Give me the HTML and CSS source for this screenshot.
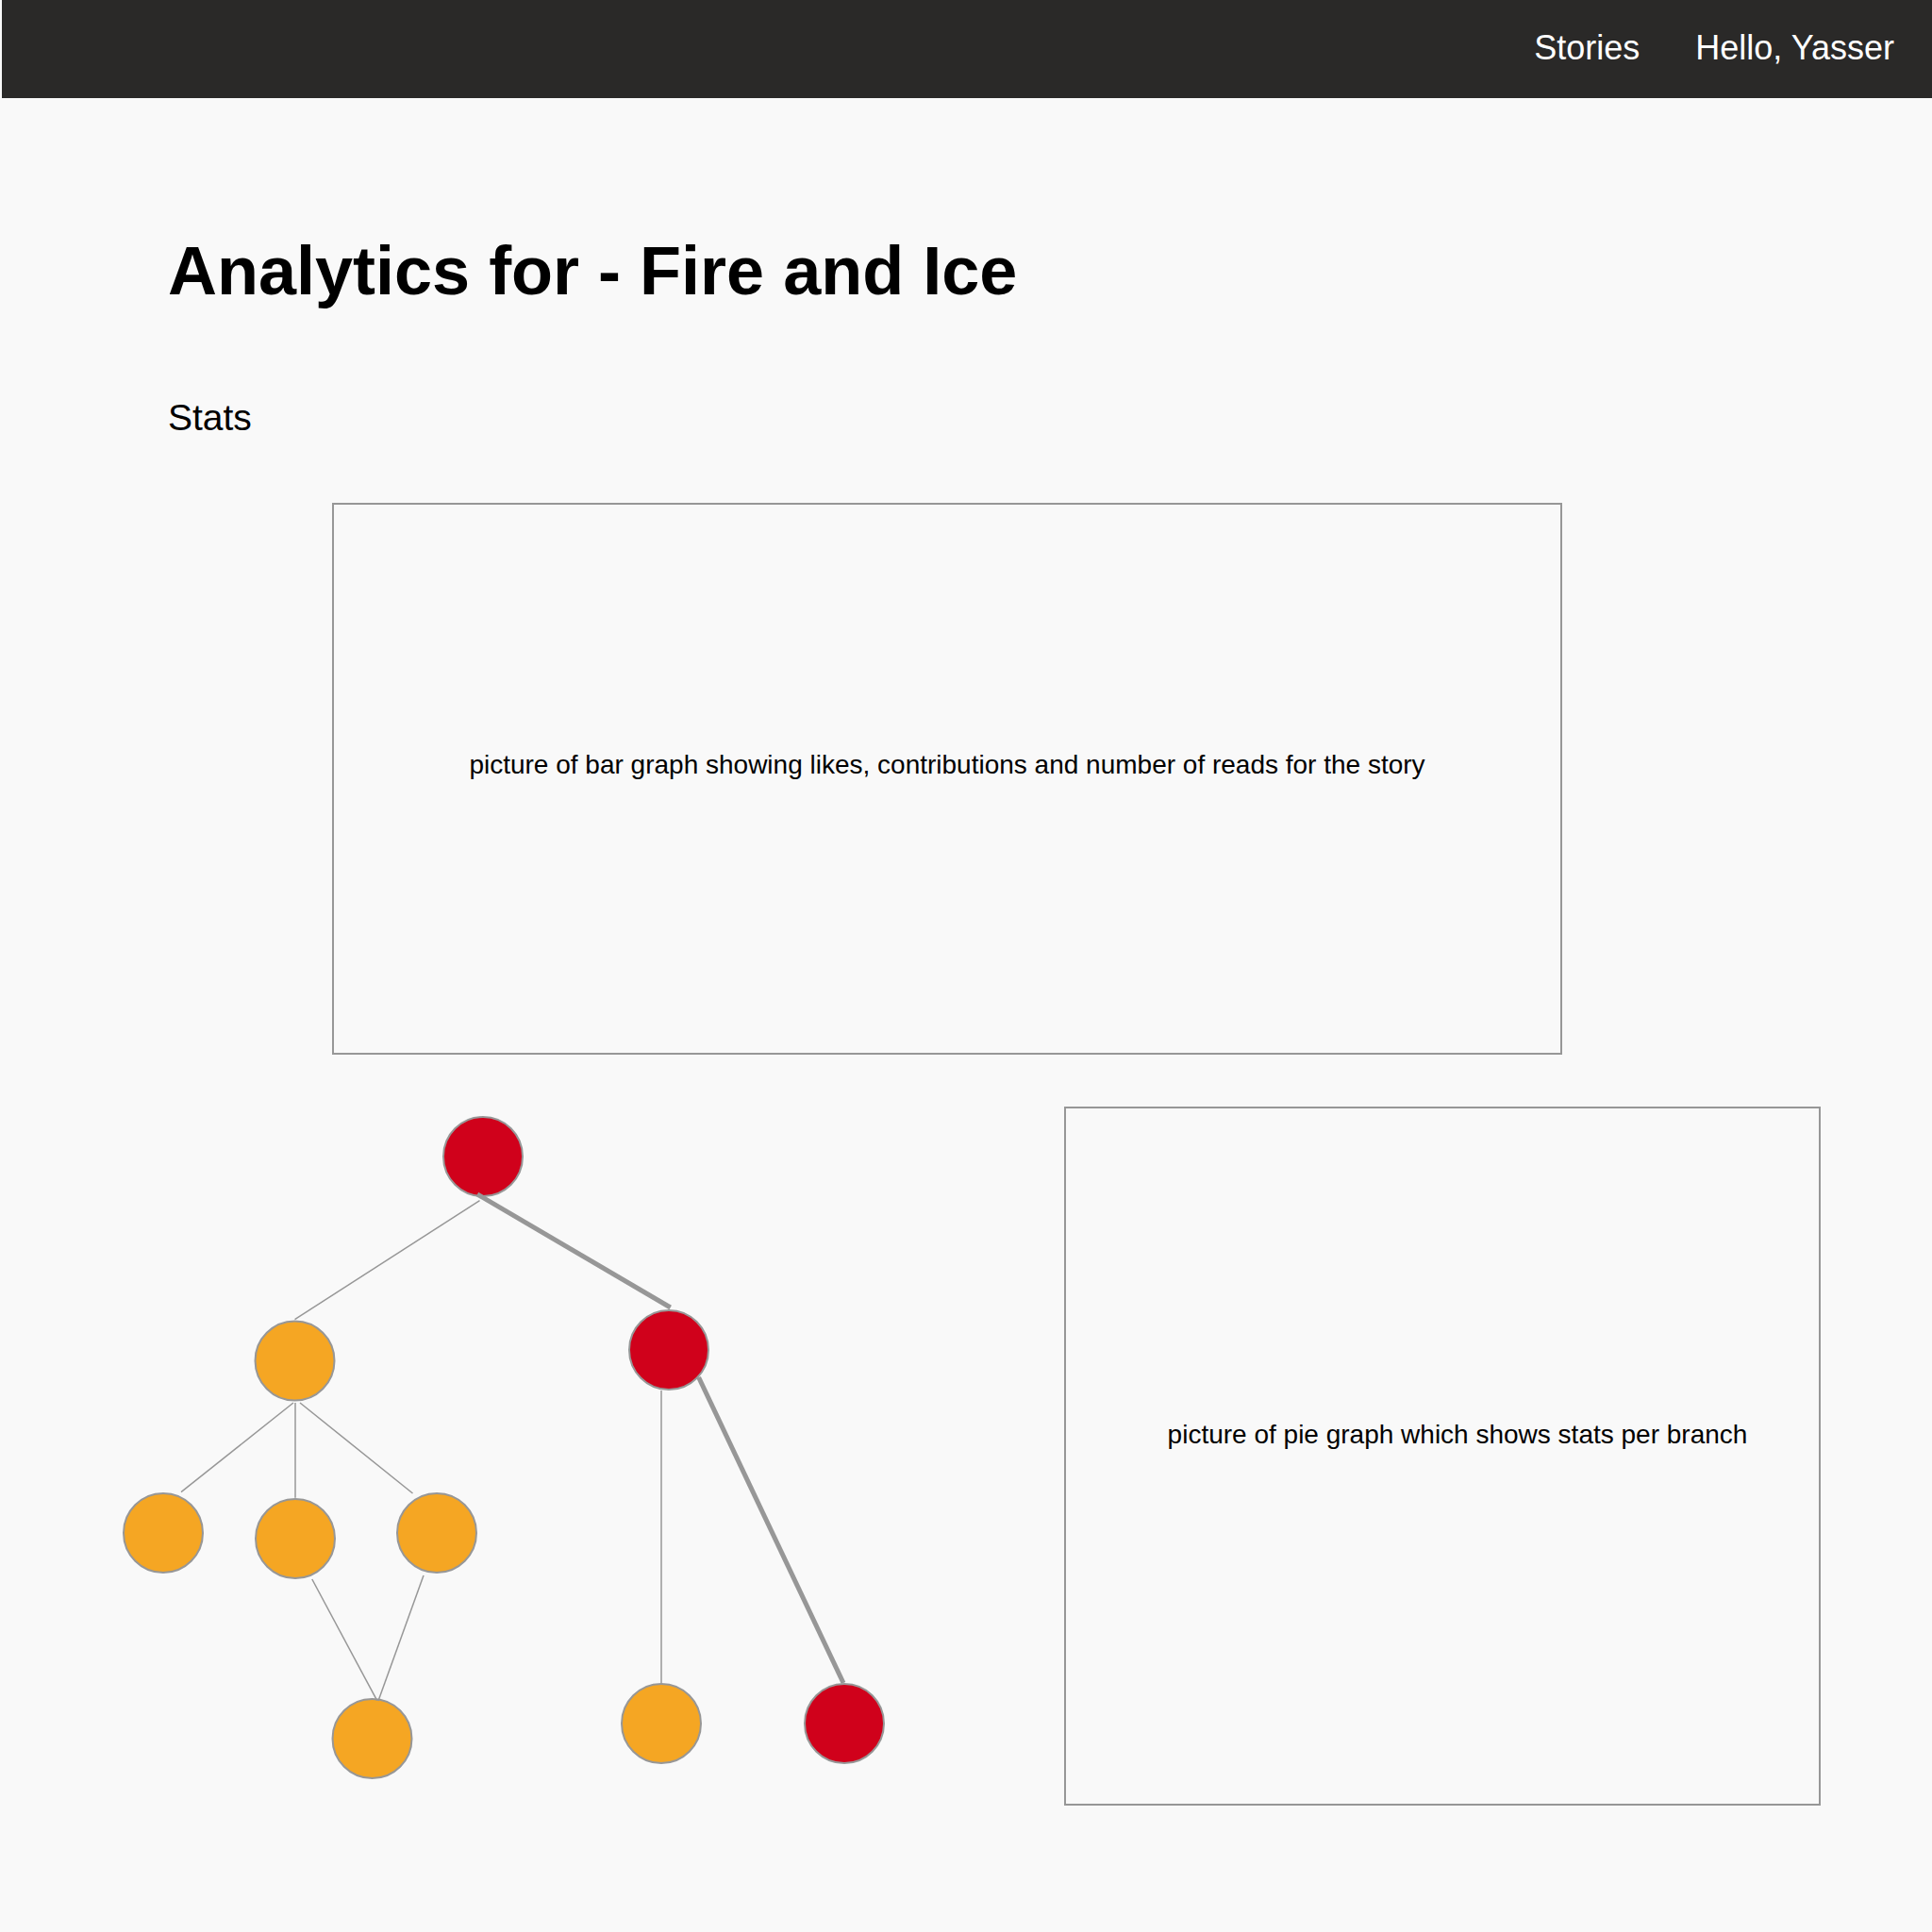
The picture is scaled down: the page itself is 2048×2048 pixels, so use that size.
FILE: index.html
```html
<!DOCTYPE html>
<html lang="en">
<head>
<meta charset="utf-8">
<title>Analytics for - Fire and Ice</title>
<link rel="stylesheet" href="styles.css">
</head>
<body>
<header class="topbar">
  <nav class="nav">
    <a class="nav-link" href="#">Stories</a>
    <a class="nav-link" href="#">Hello, Yasser</a>
  </nav>
</header>
<main class="page">
  <section class="intro">
    <h1 class="title">Analytics for - Fire and Ice</h1>
    <h2 class="subtitle">Stats</h2>
  </section>
  <div class="bar-box">
    <p class="placeholder">picture of bar graph showing likes, contributions and number of reads for the story</p>
  </div>
  <div class="lower-row">
    <svg class="tree" width="860" height="741" viewBox="0 0 860 741" xmlns="http://www.w3.org/2000/svg">
      <g class="nodes">
        <circle class="red" cx="412" cy="53" r="42"/>
        <circle class="orange" cx="212.5" cy="269.5" r="42"/>
        <circle class="red" cx="609" cy="258" r="42"/>
        <circle class="orange" cx="73" cy="452" r="42"/>
        <circle class="orange" cx="213" cy="458" r="42"/>
        <circle class="orange" cx="363" cy="452" r="42"/>
        <circle class="orange" cx="294.5" cy="670" r="42"/>
        <circle class="orange" cx="601" cy="654" r="42"/>
        <circle class="red" cx="795" cy="654" r="42"/>
      </g>
      <g class="edges">
        <line class="thin" x1="408.5" y1="99.7" x2="212.5" y2="225.7"/>
        <line class="thick" x1="406" y1="93" x2="610.7" y2="213"/>
        <line class="thin" x1="601" y1="301" x2="601" y2="611"/>
        <line class="thick" x1="640.6" y1="287" x2="794" y2="611"/>
        <line class="thin" x1="211" y1="314" x2="92" y2="408.7"/>
        <line class="thin" x1="213" y1="314" x2="213" y2="414.7"/>
        <line class="thin" x1="218" y1="314" x2="337.5" y2="410"/>
        <line class="thin" x1="230.8" y1="501" x2="299.7" y2="629.7"/>
        <line class="thin" x1="349" y1="497" x2="301" y2="630"/>
      </g>
    </svg>
    <div class="pie-box">
      <p class="placeholder">picture of pie graph which shows stats per branch</p>
    </div>
  </div>
</main>
</body>
</html>
```
FILE: styles.css
```css
html, body {
  margin: 0;
  padding: 0;
}

body {
  background: #f9f9f9;
  font-family: "Liberation Sans", Arial, sans-serif;
  color: #000;
}

.topbar {
  margin-left: 2px;
  height: 104px;
  background: #2a2928;
  display: flex;
  align-items: center;
  justify-content: flex-end;
  padding-right: 40px;
}

.nav {
  display: flex;
  gap: 59px;
  margin-top: -2px;
}

.nav-link {
  color: #fff;
  text-decoration: none;
  font-size: 36px;
}

.page {
  display: flex;
  flex-direction: column;
}

.intro {
  padding-left: 178px;
}

.title {
  margin: 142px 0 0 0;
  font-size: 72px;
  font-weight: bold;
}

.subtitle {
  margin: 93px 0 0 0;
  font-size: 39px;
  font-weight: normal;
}

.bar-box {
  box-sizing: border-box;
  margin: 68px 0 0 352px;
  width: 1304px;
  height: 585px;
  border: 2px solid #979797;
  display: flex;
  align-items: center;
  justify-content: center;
  padding-bottom: 30px;
}

.placeholder {
  margin: 0;
  font-size: 28px;
}

.lower-row {
  display: flex;
  margin-top: 55px;
}

.tree {
  display: block;
  margin-left: 100px;
}

.tree circle {
  stroke: #979797;
  stroke-width: 2;
}

.tree .red {
  fill: #d0011b;
}

.tree .orange {
  fill: #f5a623;
}

.tree line {
  stroke: #979797;
}

.tree .thin {
  stroke-width: 1.5;
}

.tree .thick {
  stroke-width: 5;
}

.pie-box {
  box-sizing: border-box;
  margin-left: 168px;
  width: 802px;
  height: 741px;
  border: 2px solid #979797;
  display: flex;
  align-items: center;
  justify-content: center;
  padding-left: 32px;
  padding-bottom: 45px;
}
```
